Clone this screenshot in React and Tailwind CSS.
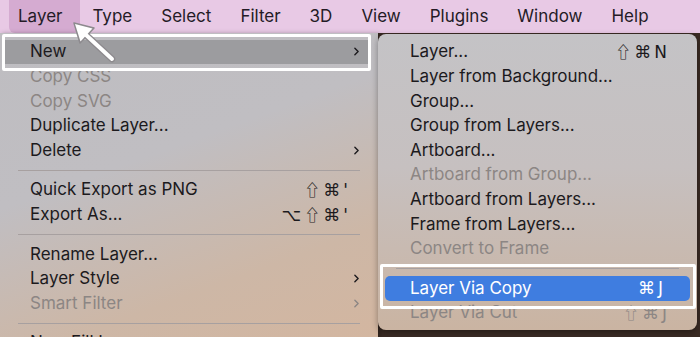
import React from 'react'
import { ChevronRight } from 'lucide-react'

const BAR = ['Layer', 'Type', 'Select', 'Filter', '3D', 'View', 'Plugins', 'Window', 'Help']

const LEFT = [
  { label: 'New', sub: true, hot: true },
  { label: 'Copy CSS', off: true },
  { label: 'Copy SVG', off: true },
  { label: 'Duplicate Layer...' },
  { label: 'Delete', sub: true },
  'sep',
  { label: 'Quick Export as PNG', keys: "⇧⌘'" },
  { label: 'Export As...', keys: "⌥⇧⌘'" },
  'sep',
  { label: 'Rename Layer...' },
  { label: 'Layer Style', sub: true },
  { label: 'Smart Filter', sub: true, off: true },
  'sep',
  { label: 'New Fill Layer', sub: true },
]

const RIGHT = [
  { label: 'Layer...', keys: '⇧⌘N' },
  { label: 'Layer from Background...' },
  { label: 'Group...' },
  { label: 'Group from Layers...' },
  { label: 'Artboard...' },
  { label: 'Artboard from Group...', off: true },
  { label: 'Artboard from Layers...' },
  { label: 'Frame from Layers...' },
  { label: 'Convert to Frame', off: true },
  'sep',
  { label: 'Layer Via Copy', keys: '⌘J', blue: true },
  { label: 'Layer Via Cut', keys: '⇧⌘J', off: true },
]

// ⇧ drawn wider from a CJK face, the rest from DejaVu
function Keys({ keys }) {
  return [...keys].map((k, i) => (
    <span
      key={i}
      className={
        k === '⇧'
          ? "font-['Noto_Sans_CJK_JP','DejaVu_Sans',sans-serif] text-[16px]"
          : "font-['DejaVu_Sans',sans-serif]"
      }
    >
      {k}
    </span>
  ))
}

function Row({ item, side }) {
  if (item === 'sep') {
    return (
      <div className="h-[15px] flex items-center px-[18px]">
        <div className="h-px w-full bg-[#a7a0a0]" />
      </div>
    )
  }
  let tone = item.off ? 'text-[#8c8684]' : 'text-[#1c1a1d]'
  let bg = ''
  if (item.hot) bg = 'bg-[#9c9c9f] ml-[5px] mr-[10px] pl-[25px]'
  else if (item.blue) {
    bg = 'bg-[#3f7de0] rounded-[5px] mx-[7px] pl-[25px]'
    tone = 'text-white'
  } else bg = side === 'left' ? 'pl-[30px]' : 'pl-[32px]'
  return (
    <div className={`h-[24.6px] flex items-center text-[17px] leading-none ${bg} ${tone}`}>
      <span className="flex-1 whitespace-nowrap">{item.label}</span>
      {item.keys && (
        <span
          className={`text-[17px] tracking-[3px] whitespace-nowrap ${
            item.blue ? 'mr-[24px]' : 'mr-[27px]'
          } ${item.off ? 'text-[#8c8684]' : ''}`}
        >
          <Keys keys={item.keys} />
        </span>
      )}
      {item.sub && (
        <ChevronRight
          size={13}
          strokeWidth={2.6}
          className={item.hot ? 'mr-[5px]' : 'mr-[15px]'}
        />
      )}
    </div>
  )
}

export default function App() {
  return (
    <div className="relative w-[700px] h-[337px] overflow-hidden bg-[#3a2b24] font-['Inter',sans-serif]">
      {/* menu bar */}
      <div className="h-[33px] bg-[#e8c9e5] flex items-stretch pl-[9px] text-[17px] text-[#241b26]">
        {BAR.map((b, i) => (
          <div
            key={b}
            className={`flex items-center ${
              i === 0 ? 'bg-[#d5abd1] rounded-b-[6px] pl-[9px] pr-[18px] mr-[12px]' : 'mr-[29px]'
            }`}
          >
            {b}
          </div>
        ))}
      </div>

      <div className="flex items-start">
        {/* left menu */}
        <div className="w-[378px] h-[304px] pt-[6.7px] bg-[linear-gradient(160deg,#bebdc1_0%,#c0bec2_40%,#cdb7a6_75%,#d3b6a0_100%)] shadow-[2px_0_4px_rgba(0,0,0,0.25)]">
          {LEFT.map((it, i) => (
            <Row key={i} item={it} side="left" />
          ))}
        </div>

        {/* submenu */}
        <div className="w-[319px] mt-px pt-[5.7px] pb-[5px] rounded-[8px] bg-[linear-gradient(180deg,#c4c3c6_0%,#c6c0c0_45%,#cab4a2_100%)] shadow-[0_2px_6px_rgba(0,0,0,0.35)]">
          {RIGHT.map((it, i) => (
            <Row key={i} item={it} side="right" />
          ))}
        </div>
      </div>

      {/* annotation frames */}
      <div className="absolute left-[2px] top-[34px] w-[369px] h-[37px] border-[3px] border-white rounded-[2px]" />
      <div className="absolute left-[380px] top-[264px] w-[316px] h-[45px] border-[3px] border-white rounded-[2px]" />

      {/* annotation arrow */}
      <svg className="absolute left-[60px] top-[17px]" width="60" height="50" viewBox="0 0 60 50">
        <g stroke="#8d8a8e" strokeWidth="1.5" strokeLinejoin="round">
          <line x1="25" y1="17" x2="52" y2="42" strokeWidth="6.5" strokeLinecap="round" />
          <polygon points="14,6 34,11 20,26" fill="#8d8a8e" />
        </g>
        <line x1="25" y1="17" x2="52" y2="42" stroke="white" strokeWidth="4" strokeLinecap="round" />
        <polygon points="15,7 32.5,11.5 20.5,24.5" fill="white" />
      </svg>
    </div>
  )
}
